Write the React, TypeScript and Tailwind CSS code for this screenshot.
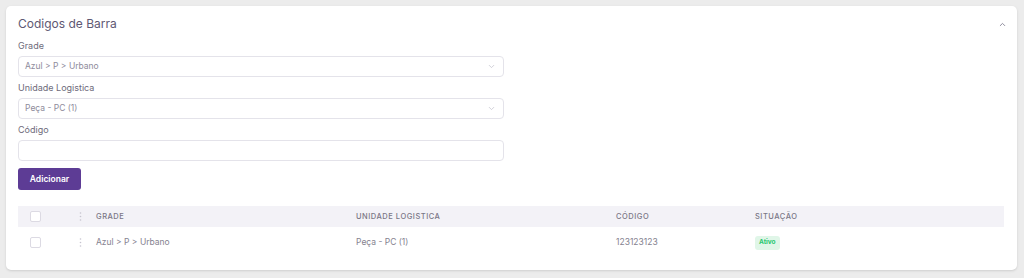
import { ChevronDown, ChevronUp } from "lucide-react";

const font = { fontFamily: "Inter, 'Noto Sans', sans-serif" };

function Label({ children }: { children: React.ReactNode }) {
    return <div className="mb-[3px] text-[9px] leading-[14px] text-[#6e6b7b]">{children}</div>;
}

function SelectBox({ value }: { value: string }) {
    return (
        <div className="flex h-[21px] w-[486px] items-center justify-between rounded-[4px] border border-[#e4e3ea] bg-white pl-[6px] pr-[7px]">
            <span className="text-[8.5px] text-[#8e8b9b]">{value}</span>
            <ChevronDown className="h-[9px] w-[9px] text-[#c3c1cc]" strokeWidth={2} />
        </div>
    );
}

function Checkbox() {
    return <div className="h-[11px] w-[11px] rounded-[2px] border border-[#dcdae3] bg-white" />;
}

function Dots() {
    return (
        <svg width="3" height="9" viewBox="0 0 3 9" className="text-[#c6c4cf]">
            <circle cx="1.5" cy="1" r="0.8" fill="currentColor" />
            <circle cx="1.5" cy="4.5" r="0.8" fill="currentColor" />
            <circle cx="1.5" cy="8" r="0.8" fill="currentColor" />
        </svg>
    );
}

export default function App() {
    const cols = "grid grid-cols-[61px_17px_260px_260px_139px_1fr] items-center";

    return (
        <div className="h-[278px] w-[1024px] bg-[#ececec] pl-[6px] pr-[7px] pt-[6px]" style={font}>
            <div className="h-[264px] rounded-[5px] bg-white px-[12px] pt-[8px] shadow-sm">

                <div className="flex items-center justify-between">
                    <h2 className="text-[12px] leading-[20px] text-[#5e5873]">Codigos de Barra</h2>
                    <ChevronUp className="mr-[-2px] h-[9px] w-[9px] text-[#8a8799]" strokeWidth={2.5} />
                </div>

                <div className="mt-[5px]">
                    <Label>Grade</Label>
                    <SelectBox value="Azul > P > Urbano" />
                </div>

                <div className="mt-[4px]">
                    <Label>Unidade Logistica</Label>
                    <SelectBox value="Peça - PC (1)" />
                </div>

                <div className="mt-[4px]">
                    <Label>Código</Label>
                    <div className="h-[21px] w-[486px] rounded-[4px] border border-[#e4e3ea] bg-white" />
                </div>

                <button className="mt-[7px] h-[22px] w-[63px] rounded-[3px] bg-[#5d3c95] text-[8.5px] font-semibold text-white">
                    Adicionar
                </button>

                <div className="mt-[16px] w-[986px]">
                    <div className={`${cols} h-[21px] bg-[#f3f2f7] text-[7.5px] font-medium uppercase tracking-[0.07em] text-[#7a7786]`}>
                        <div className="pl-[12px]"><Checkbox /></div>
                        <Dots />
                        <div>Grade</div>
                        <div>Unidade Logistica</div>
                        <div>Código</div>
                        <div>Situação</div>
                    </div>
                    <div className={`${cols} h-[31px] text-[8.5px] text-[#85828f]`}>
                        <div className="pl-[12px]"><Checkbox /></div>
                        <Dots />
                        <div>Azul &gt; P &gt; Urbano</div>
                        <div>Peça - PC (1)</div>
                        <div>123123123</div>
                        <div>
                            <span className="inline-block rounded-[3px] bg-[#e0f6e8] px-[4px] py-[2px] text-[6.5px] font-bold text-[#28c76f]">
                                Ativo
                            </span>
                        </div>
                    </div>
                </div>

            </div>
        </div>
    );
}
